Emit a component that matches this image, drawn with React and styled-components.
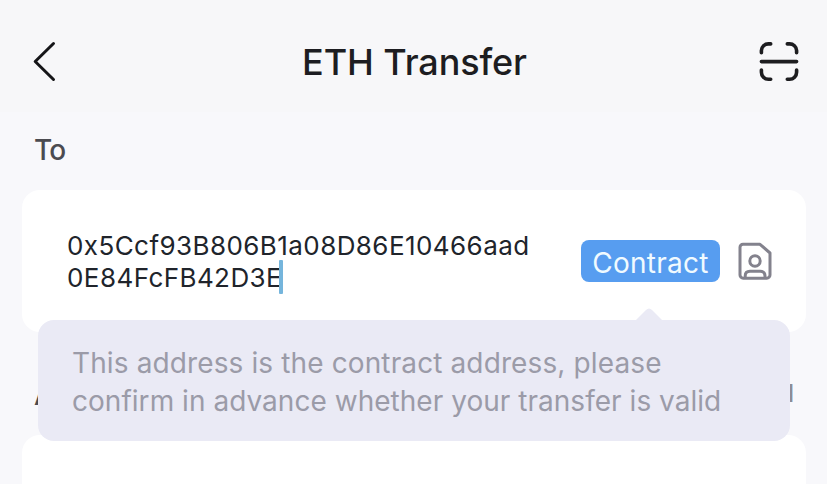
import React, { useState } from "react";
import styled, { createGlobalStyle } from "styled-components";

const GlobalStyle = createGlobalStyle`
  * {
    box-sizing : border-box;
  }

  body {
    margin : 0;
    background : #f8f8fb;
    font-family : Inter, "Liberation Sans", sans-serif;
    overflow : hidden;
  }
`;

const Page = styled.div`
  display : flex;
  flex-direction : column;
  width : 100%;
  height : 484px;
  overflow : hidden;
`;

const Header = styled.header`
  display : flex;
  justify-content : space-between;
  align-items : center;
  flex-shrink : 0;
  height : 112px;
  padding : 12px 26px 0 30px;
  background : #f7f7f9;
`;

const Title = styled.h1`
  margin : 0 0 0 12px;
  font-size : 36px;
  font-weight : 500;
  line-height : 44px;
  letter-spacing : -0.1px;
  color : #1d1d21;
`;

const IconButton = styled.button`
  display : flex;
  padding : 0;
  border : none;
  background : none;
  cursor : pointer;
`;

const LabelRow = styled.div`
  display : flex;
  justify-content : space-between;
  align-items : center;
  flex-shrink : 0;
  height : ${props => props.$height}px;
  padding : 0 33px 0 34px;
`;

const Label = styled.div`
  padding-bottom : 2px;
  font-size : 28px;
  font-weight : 450;
  line-height : 34px;
  letter-spacing : -0.8px;
  color : #4b4b50;
`;

const AmountLabel = styled.div`
  padding-top : ${props => props.$top}px;
  font-size : ${props => props.$size}px;
  font-weight : 500;
  line-height : 32px;
  color : ${props => props.$color};
`;

const Card = styled.section`
  position : relative;
  display : flex;
  align-items : center;
  flex-shrink : 0;
  height : 142px;
  margin : 0 21px 0 22px;
  padding : 0 34px 0 45px;
  border-radius : 18px;
  background : #ffffff;
`;

const Address = styled.div`
  flex : 1;
  padding-top : 1px;
  font-size : 26px;
  line-height : 32px;
  letter-spacing : 0.43px;
  color : #20242b;
`;

const Caret = styled.span`
  display : inline-block;
  width : 4px;
  height : 34px;
  margin : -10px 0 -9px -3px;
  border-radius : 1px;
  vertical-align : 2px;
  background : #75b5dc;
`;

const Tag = styled.div`
  display : flex;
  justify-content : center;
  align-items : center;
  width : 139px;
  height : 42px;
  margin-right : 18px;
  padding-top : 3px;
  border-radius : 8px;
  background : #579df0;
  font-size : 28px;
  letter-spacing : 0.25px;
  color : #f0faff;
`;

const Tooltip = styled.div`
  position : absolute;
  top : 130px;
  left : 16px;
  z-index : 1;
  width : 752px;
  height : 121px;
  padding : 25px 34px;
  border-radius : 16px;
  background : #eaeaf5;
  color : #9b9ba8;
`;

const TooltipLine = styled.div`
  font-size : 28px;
  line-height : 37.5px;
  letter-spacing : ${props => props.$spacing}px;
  white-space : nowrap;
`;

const Arrow = styled.svg`
  position : absolute;
  top : -13px;
  left : 597px;
`;

const BackIcon = () => (
  <svg width="30" height="44" viewBox="0 0 30 44" fill="none" stroke="#151518" strokeWidth="3" strokeLinecap="round" strokeLinejoin="round">
    <path d="M23.5 3.5 5.2 21.5 23.5 39.5" />
  </svg>
);

const ScanIcon = () => (
  <svg width="44" height="44" viewBox="0 0 44 44" fill="none" stroke="#1d1d20" strokeWidth="3.6" strokeLinecap="round" strokeLinejoin="round">
    <path d="M4.4 12.8v-2.3a7 7 0 0 1 7-6.6h2.3M30.3 3.9h2.3a7 7 0 0 1 7 6.6v2.3M39.6 30v2.2a7 7 0 0 1-7 7h-2.3M13.7 39.2h-2.3a7 7 0 0 1-7-7V30M4.4 21.6h35.2" />
  </svg>
);

const ContactIcon = () => (
  <svg width="34" height="38" viewBox="0 0 34 38" fill="none" stroke="#83828d" strokeWidth="3" strokeLinejoin="round">
    <path d="M5 2.3H22L32 11V33a3.2 3.2 0 0 1-3.2 3.2H5.2A3.2 3.2 0 0 1 2 33V5.3a3 3 0 0 1 3-3Z" />
    <circle cx="17" cy="19" r="5.2" />
    <path d="M7.2 35.5V34c0-3 1.8-4.7 4.8-4.7h10.2c3 0 4.8 1.7 4.8 4.7v1.5" />
  </svg>
);

const App = () => {
  const [showTip, setShowTip] = useState(true);

  return (
    <Page>
      <GlobalStyle />
      <Header>
        <IconButton aria-label="Back"><BackIcon /></IconButton>
        <Title>ETH Transfer</Title>
        <IconButton aria-label="Scan"><ScanIcon /></IconButton>
      </Header>
      <LabelRow $height={78}>
        <Label>To</Label>
      </LabelRow>
      <Card>
        <Address>
          0x5Ccf93B806B1a08D86E10466aad
          <br />
          0E84FcFB42D3E<Caret />
        </Address>
        <Tag onClick={() => setShowTip(!showTip)}>Contract</Tag>
        <IconButton aria-label="Contacts"><ContactIcon /></IconButton>
        {showTip && (
          <Tooltip>
            <Arrow width="28" height="14" viewBox="0 0 28 14">
              <path d="M0 14 11 3Q14 0 17 3L28 14Z" fill="#eaeaf5" />
            </Arrow>
            <TooltipLine $spacing={0.12}>This address is the contract address, please</TooltipLine>
            <TooltipLine $spacing={0.03}>confirm in advance whether your transfer is valid</TooltipLine>
          </Tooltip>
        )}
      </Card>
      <LabelRow $height={103}>
        <AmountLabel $color="#4b4b50" $size={28} $top={22}>A</AmountLabel>
        <AmountLabel $color="#8c8c95" $size={24} $top={20}>l</AmountLabel>
      </LabelRow>
      <Card />
    </Page>
  );
};

export default App;
